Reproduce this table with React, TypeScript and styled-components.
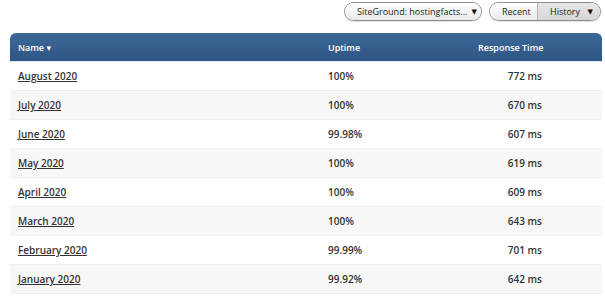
import React from "react";
import styled, { createGlobalStyle } from "styled-components";

const Global = createGlobalStyle`
    body {
        margin: 0;
        background: #fff;
        font-family: "Open Sans", "DejaVu Sans", sans-serif;
        color: #333;
    }
`;

const Page = styled.div`
    width: 605px;
    height: 303px;
    overflow: hidden;
`;

const Toolbar = styled.div`
    display: flex;
    justify-content: flex-end;
    align-items: center;
    gap: 7px;
    padding: 2px 4px 0 0;
    height: 19px;
`;

const Pill = styled.div`
    display: flex;
    flex-shrink: 0;
    align-items: stretch;
    height: 17px;
    border: 1px solid #8e8e8e;
    border-radius: 10px;
    overflow: hidden;
    font-size: 9px;
    color: #222;
    white-space: nowrap;
    box-shadow: 0 1px 1px rgba(0, 0, 0, 0.12);
`;

const Segment = styled.div<{ $active?: boolean; $w: number }>`
    display: flex;
    flex-shrink: 0;
    align-items: center;
    justify-content: space-between;
    width: ${p => p.$w}px;
    padding: 0 7px 0 12px;
    box-sizing: border-box;
    background: ${p => p.$active
        ? "linear-gradient(#e6e6e6, #d6d6d6)"
        : "linear-gradient(#ffffff, #e9e9e9)"};
    & + & {
        border-left: 1px solid #b5b5b5;
    }
`;

const Caret = styled.span`
    font-size: 7px;
    color: #111;
    margin-left: 4px;
`;

const Table = styled.div`
    margin: 12px 0 0 10px;
    width: 592px;
`;

const Row = styled.div<{ $even?: boolean }>`
    display: grid;
    grid-template-columns: 310px 150px 80px 1fr;
    align-items: center;
    height: 29px;
    font-size: 10px;
    font-weight: 600;
    background: ${p => (p.$even ? "#f7f7f7" : "#fff")};
    border-bottom: 1px solid #f0f0f0;
    box-sizing: border-box;
`;

const Head = styled(Row)`
    font-size: 9px;
    color: #fff;
    background: linear-gradient(#3e6997, #2d5585);
    border-radius: 6px 6px 0 0;
    border-bottom: 1px solid #e0e6ee;
`;

const Cell = styled.div<{ $right?: boolean }>`
    padding: 0 8px;
    text-align: ${p => (p.$right ? "right" : "left")};
    white-space: nowrap;
`;

const Link = styled.a`
    color: #333;
    text-decoration: underline;
`;

const rows = [
    ["August 2020", "100%", "772 ms"],
    ["July 2020", "100%", "670 ms"],
    ["June 2020", "99.98%", "607 ms"],
    ["May 2020", "100%", "619 ms"],
    ["April 2020", "100%", "609 ms"],
    ["March 2020", "100%", "643 ms"],
    ["February 2020", "99.99%", "701 ms"],
    ["January 2020", "99.92%", "642 ms"],
];

const App: React.FC = () => {
    return (
        <Page>
            <Global />
            <Toolbar>
                <Pill>
                    <Segment $w={136}>
                        <span>SiteGround: hostingfacts...</span>
                        <Caret>▼</Caret>
                    </Segment>
                </Pill>
                <Pill>
                    <Segment $w={47}>Recent</Segment>
                    <Segment $w={63} $active>
                        <span>History</span>
                        <Caret>▼</Caret>
                    </Segment>
                </Pill>
            </Toolbar>
            <Table>
                <Head>
                    <Cell>Name ▾</Cell>
                    <Cell>Uptime</Cell>
                    <Cell $right>Response Time</Cell>
                    <Cell />
                </Head>
                {rows.map((r, i) => (
                    <Row key={r[0]} $even={i % 2 === 1}>
                        <Cell><Link>{r[0]}</Link></Cell>
                        <Cell>{r[1]}</Cell>
                        <Cell $right>{r[2]}</Cell>
                        <Cell />
                    </Row>
                ))}
            </Table>
        </Page>
    );
};

export default App;
